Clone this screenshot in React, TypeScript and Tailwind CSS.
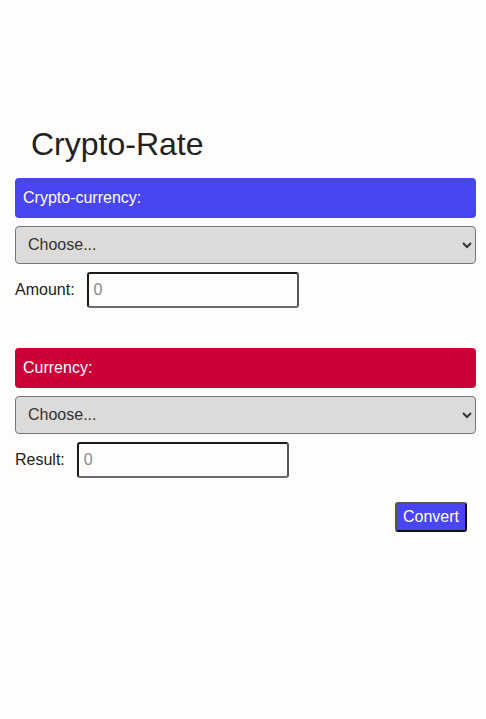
export default function App() {
  return (
    <div className="min-h-screen bg-[#fefdfc] pl-[15px] pr-[10px] pt-[126px] font-['Liberation_Sans',Arial,sans-serif] text-[#222]">
      <h1 className="pl-4 text-[32px] leading-[37px]">Crypto-Rate</h1>

      {/* crypto side */}
      <div className="mt-[15px] flex h-10 items-center rounded bg-[#4a45f3] px-2 text-base text-white">
        Crypto-currency:
      </div>
      <select className="mt-2 h-[38px] w-full rounded border border-[#777] bg-[#dcdbda] pb-[2px] pl-2 text-base text-[#333]">
        <option>Choose...</option>
      </select>
      <div className="mt-[8px] flex items-center gap-3">
        <label className="text-base">Amount:</label>
        <input
          placeholder="0"
          className="h-[36px] w-[212px] rounded-[3px] border-2 border-t-[#1a1a1a] border-l-[#1a1a1a] border-r-[#555] border-b-[#6b6b6b] bg-[#fefdfc] pl-[5px] text-base placeholder:text-[#888]"
        />
      </div>

      {/* fiat side */}
      <div className="mt-[40px] flex h-10 items-center rounded bg-[#cc0038] px-2 text-base text-white">
        Currency:
      </div>
      <select className="mt-2 h-[38px] w-full rounded border border-[#777] bg-[#dcdbda] pb-[2px] pl-2 text-base text-[#333]">
        <option>Choose...</option>
      </select>
      <div className="mt-[8px] flex items-center gap-3">
        <label className="text-base">Result:</label>
        <input
          placeholder="0"
          className="h-[36px] w-[212px] rounded-[3px] border-2 border-t-[#1a1a1a] border-l-[#1a1a1a] border-r-[#555] border-b-[#6b6b6b] bg-[#fefdfc] pl-[5px] text-base placeholder:text-[#888]"
        />
      </div>

      <div className="mt-[24px] flex justify-end pr-[9px]">
        <button className="h-[30px] rounded-[3px] border-2 border-t-[#555] border-l-[#555] border-r-[#111] border-b-[#111] bg-[#4a45f3] px-[6px] text-base text-white">
          Convert
        </button>
      </div>
    </div>
  );
}
